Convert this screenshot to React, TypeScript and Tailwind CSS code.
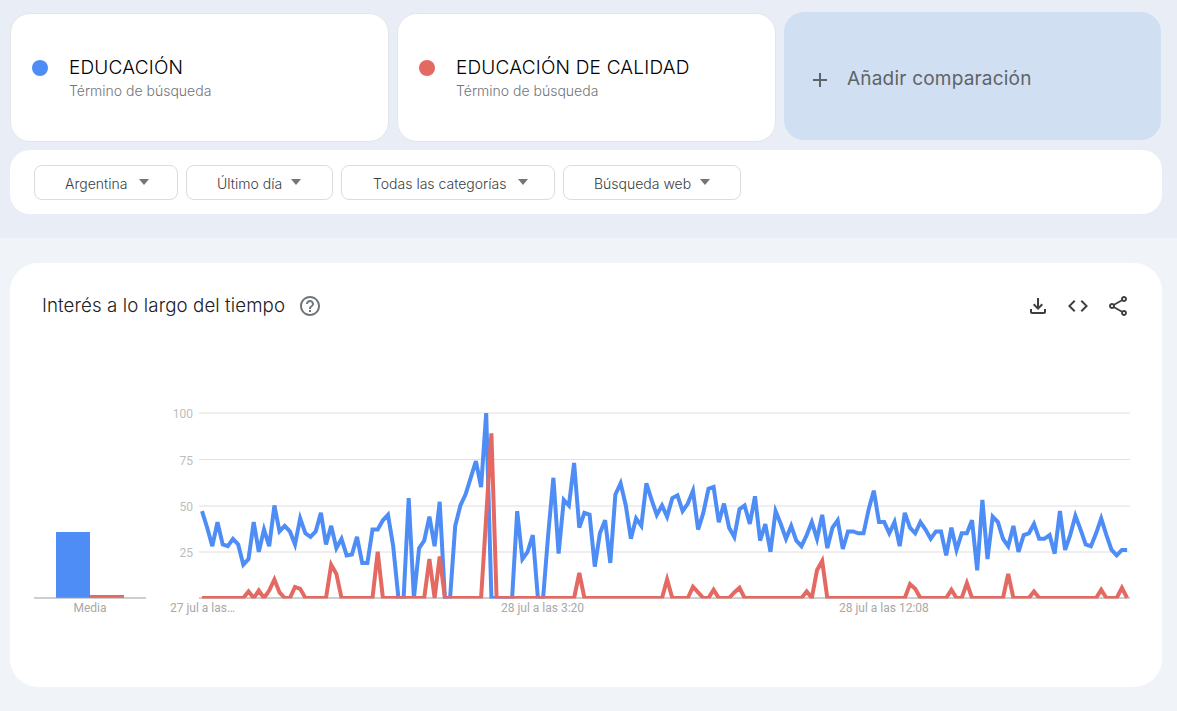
import { MdAdd, MdCode, MdHelpOutline, MdOutlineFileDownload, MdOutlineShare } from 'react-icons/md';

const BLUE_LINE = [
  47, 38, 28, 41, 29, 28, 32, 29, 18, 21, 41, 25, 37, 28, 50, 36, 39, 36, 29, 43,
  35, 33, 36, 46, 29, 39, 27, 32, 23, 23.5, 33, 19, 19, 37, 37, 42, 45, 28, 0, 0,
  54, 0, 27, 31, 44, 28, 52, 0, 0, 39, 50, 56, 65, 74, 60, 100, 0, 0, 0, 0,
  0, 47, 21, 25, 34, 0, 0, 35, 65, 24, 53, 50, 73, 38, 46, 45, 17, 35, 42, 19,
  56, 62, 50, 32, 43, 39, 62, 53, 45, 50, 44, 54, 55.5, 47, 51, 58, 37, 46, 59, 60,
  41, 51, 38, 33, 48, 50, 40, 55, 31, 40, 25, 47, 40, 32, 39, 31, 28, 34, 41, 32,
  45, 27, 38, 42, 26.5, 36, 36, 35, 35, 48, 58, 41, 41, 35, 41, 28, 46, 38, 35, 41,
  37, 32, 36, 36, 23, 38, 26, 35, 35, 42, 15, 53, 21, 44, 41, 32, 28, 39, 25, 34,
  35, 40, 32, 32, 34, 24, 47, 26, 34, 44.5, 37, 29, 28, 35, 43, 34, 26, 23, 26, 26,
];

const RED_SPIKES: Record<number, number> = {
  9: 3.5, 11: 4, 13: 4, 14: 10, 15: 3, 18: 6, 19: 5, 25: 18, 26: 13, 34: 25,
  44: 21, 46: 22.5, 55: 44, 56: 89, 73: 13.5, 90: 10, 95: 6, 96: 3, 99: 4.5, 103: 3,
  104: 5.5, 117: 3.5, 119: 15, 120: 20, 137: 7.5, 138: 5, 145: 4.5, 148: 8, 156: 13, 161: 3.5,
  174: 4.5, 178: 5.5,
};

const RED_LINE = BLUE_LINE.map((_, i) => RED_SPIKES[i] ?? 0);

const toPoints = (values: number[]) =>
  values.map((v, i) => `${(192 + i * 5.168).toFixed(1)},${(335 - v * 1.85).toFixed(1)}`).join(' ');

const GRID = [
  { label: '100', y: 150 },
  { label: '75', y: 196.5 },
  { label: '50', y: 243 },
  { label: '25', y: 289 },
];

const FILTERS = [
  { label: 'Argentina', width: 'w-[144px]', pl: 'pl-[30px]', gap: 'ml-[12px]' },
  { label: 'Último día', width: 'w-[147px]', pl: 'pl-[30px]', gap: 'ml-[9px]' },
  { label: 'Todas las categorías', width: 'w-[214px]', pl: 'pl-[31px]', gap: 'ml-[12px]' },
  { label: 'Búsqueda web', width: 'w-[178px]', pl: 'pl-[30px]', gap: 'ml-[9px]' },
];

function TermCard({ name, dot }: { name: string; dot: string }) {
  return (
    <div className="flex h-[129px] w-[379px] items-start rounded-[20px] border border-[#e3e5e8] bg-white pl-[21px] pt-[42px]">
      <span className={`mt-[4px] h-[16px] w-[16px] rounded-full ${dot}`} />
      <div className="ml-[21px]">
        <div className="text-[19px] font-light leading-[24px] tracking-[0.2px] text-black">{name}</div>
        <div className="mt-[1px] text-[14px] font-light leading-[20px] text-[#70757a]">Término de búsqueda</div>
      </div>
    </div>
  );
}

export default function App() {
  return (
    <div className="h-[711px] overflow-hidden bg-[#f0f4f9] font-['Inter',sans-serif]">
      <div className="h-[238px] bg-[#e9eef6] px-[10px] pt-[12px]">
        <div className="flex items-start gap-[8px]">
          <div className="mt-[1px]">
            <TermCard name="EDUCACIÓN" dot="bg-[#4e8df5]" />
          </div>
          <div className="mt-[1px]">
            <TermCard name="EDUCACIÓN DE CALIDAD" dot="bg-[#e46962]" />
          </div>
          <div className="flex h-[128px] w-[377px] items-center rounded-[20px] bg-[#d1dff2] pl-[24px] pt-[7px] text-[#5f6368]">
            <MdAdd className="h-[24px] w-[24px]" />
            <span className="ml-[15px] text-[19px] font-normal tracking-[0.2px]">Añadir comparación</span>
          </div>
        </div>
        <div className="mt-[8px] flex h-[64px] w-[1152px] items-center gap-[8px] rounded-[20px] bg-white pl-[24px]">
          {FILTERS.map((f) => (
            <div
              key={f.label}
              className={`flex h-[35px] items-center rounded-[8px] border border-[#dadce0] ${f.width} ${f.pl}`}
            >
              <span className="pt-[2px] text-[14px] font-light text-[#3c4043]">{f.label}</span>
              <span className={`h-0 w-0 border-x-[5px] border-t-[6px] border-x-transparent border-t-[#757575] ${f.gap}`} />
            </div>
          ))}
        </div>
      </div>

      <div className="mx-[10px] mt-[25px] h-[424px] w-[1152px] rounded-[28px] bg-white">
        <div className="flex h-[86px] items-center pl-[32px] pr-[32px]">
          <h2 className="pt-[1px] text-[18.7px] font-light tracking-[0.1px] text-[#202124]">Interés a lo largo del tiempo</h2>
          <MdHelpOutline className="ml-[13px] -mt-[1px] h-[24px] w-[24px] text-[#70757a]" />
          <div className="ml-auto flex items-center gap-[16px] text-[#3c4043]">
            <MdOutlineFileDownload className="h-[24px] w-[24px]" />
            <MdCode className="h-[24px] w-[24px]" />
            <MdOutlineShare className="h-[24px] w-[24px]" />
          </div>
        </div>

        <svg width="1152" height="338" viewBox="0 0 1152 338" className="block font-['Roboto',sans-serif]">
          <defs>
            <clipPath id="plot">
              <rect x="189" y="150" width="932" height="185.5" />
            </clipPath>
          </defs>
          <g transform="translate(0,-86)">
            <rect x="46" y="269" width="34" height="66" fill="#4e8df5" />
            <rect x="80" y="332" width="34" height="3" fill="#e46962" />
            <rect x="24" y="334.5" width="112" height="1" fill="#9e9e9e" />
            <text x="80" y="349" textAnchor="middle" fontSize="12" fill="#a8a8a8">Media</text>

            {GRID.map((g) => (
              <g key={g.label}>
                <rect x="189" y={g.y - 0.5} width="931" height="1" fill="#e0e0e0" />
                <text x="183" y={g.y + 5} textAnchor="end" fontSize="12" fill="#bdbdbd">{g.label}</text>
              </g>
            ))}
            <rect x="189" y="334.5" width="931" height="1" fill="#9e9e9e" />

            <g clipPath="url(#plot)">
              <polyline points={toPoints(BLUE_LINE)} fill="none" stroke="#4e8df5" strokeWidth="4" strokeLinejoin="miter" />
              <polyline points={toPoints(RED_LINE)} fill="none" stroke="#e46962" strokeWidth="4" strokeLinejoin="miter" />
            </g>

            <text x="160" y="349" fontSize="12" fill="#a8a8a8">27 jul a las…</text>
            <text x="491" y="349" fontSize="12" fill="#a8a8a8">28 jul a las 3:20</text>
            <text x="829" y="349" fontSize="12" fill="#a8a8a8">28 jul a las 12:08</text>
          </g>
        </svg>
      </div>
    </div>
  );
}
